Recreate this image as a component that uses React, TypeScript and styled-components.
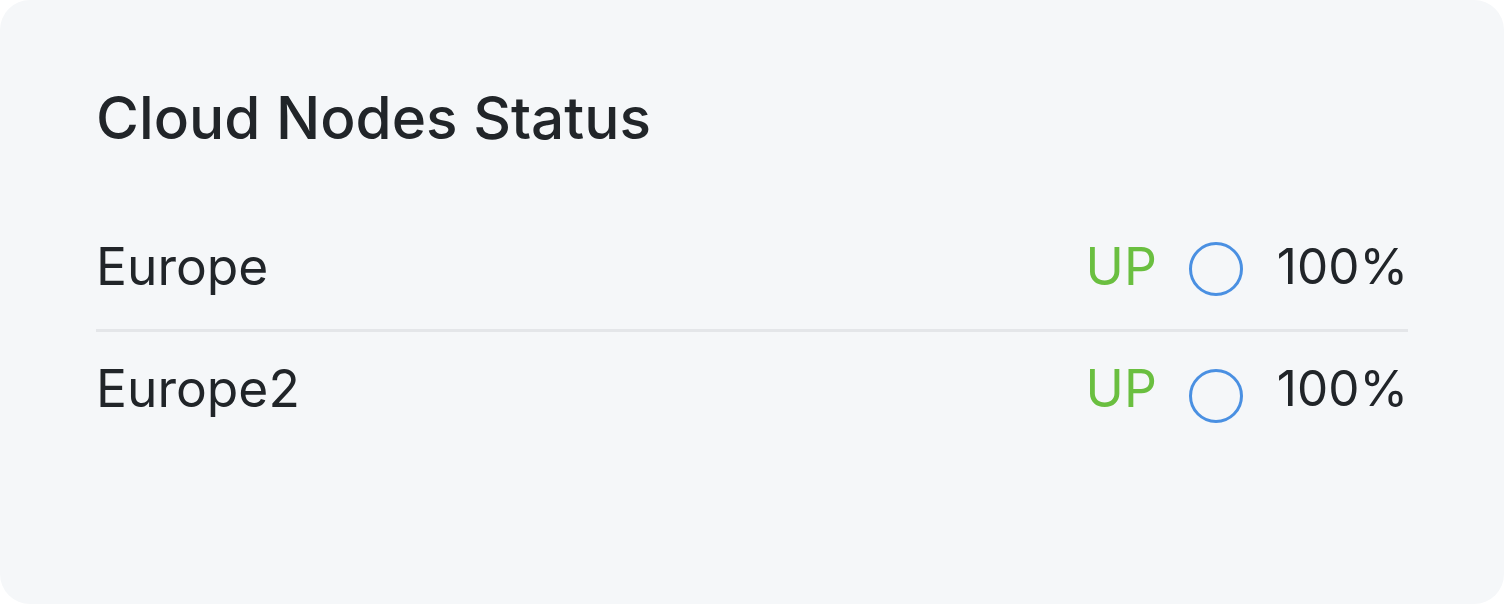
import React from "react";
import styled, { createGlobalStyle } from "styled-components";

const Global = createGlobalStyle`
  html, body { margin: 0; padding: 0; background: #ffffff; }
  body { font-family: Inter, "Noto Sans", sans-serif; }
`;

const Card = styled.section`
  box-sizing: border-box;
  width: 1504px;
  height: 604px;
  background: #f5f7f9;
  border-radius: 30px;
  padding: 84px 96px 0 96px;
  overflow: hidden;
`;

const Title = styled.h2`
  margin: 0 0 56px 0;
  font-size: 58.5px;
  font-weight: 500;
  line-height: 68px;
  color: #212529;
  letter-spacing: 0;
`;

const List = styled.div`
  display: flex;
  flex-direction: column;
`;

const Row = styled.div<{ $last?: boolean }>`
  display: flex;
  align-items: center;
  justify-content: space-between;
  padding: 28px 0 33px 0;
  border-bottom: ${(p) => (p.$last ? "none" : "3px solid #e4e6e9")};
  & + & {
    padding-top: 26px;
  }
`;

const Name = styled.span`
  font-size: 51.5px;
  line-height: 60px;
  color: #212529;
`;

const StatusGroup = styled.div`
  display: flex;
  align-items: center;
  gap: 32px;
`;

const Status = styled.span`
  font-size: 51.5px;
  line-height: 60px;
  color: #6abf40;
`;

const Ring = styled.span<{ $shift: number }>`
  box-sizing: border-box;
  width: 54px;
  height: 54px;
  margin-right: 2px;
  border-radius: 50%;
  border: 3.5px solid #4a90e2;
  transform: translateY(${(p) => p.$shift}px);
`;

const Percent = styled.span`
  font-size: 49.5px;
  line-height: 60px;
  color: #212529;
`;

const nodes = [
  { name: "Europe", status: "UP", value: "100%", shift: 3 },
  { name: "Europe2", status: "UP", value: "100%", shift: 8 },
];

export default function App() {
  return (
    <>
      <Global />
      <Card>
        <Title>Cloud Nodes Status</Title>
        <List>
          {nodes.map((n, i) => (
            <Row key={n.name} $last={i === nodes.length - 1}>
              <Name>{n.name}</Name>
              <StatusGroup>
                <Status>{n.status}</Status>
                <Ring $shift={n.shift} />
                <Percent>{n.value}</Percent>
              </StatusGroup>
            </Row>
          ))}
        </List>
      </Card>
    </>
  );
}
